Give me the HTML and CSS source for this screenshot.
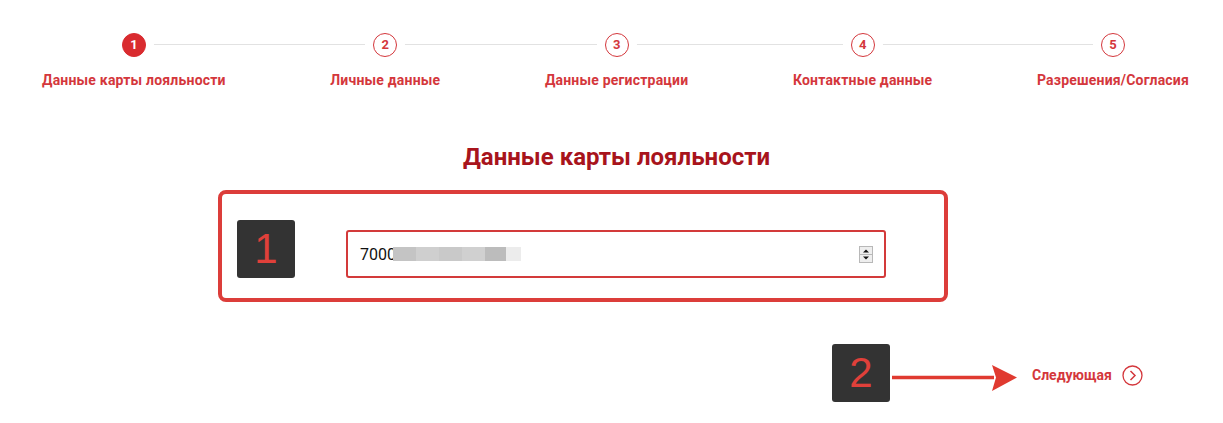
FILE: index.html
```html
<!DOCTYPE html>
<html lang="ru">
<head>
<meta charset="utf-8">
<title>Данные карты лояльности</title>
<link rel="stylesheet" href="styles.css">
</head>
<body>
<div class="stepper">
  <div class="step active"><span class="dot">1</span><span class="label">Данные карты лояльности</span></div>
  <div class="step"><span class="dot">2</span><span class="label">Личные данные</span></div>
  <div class="step"><span class="dot">3</span><span class="label">Данные регистрации</span></div>
  <div class="step"><span class="dot">4</span><span class="label">Контактные данные</span></div>
  <div class="step"><span class="dot">5</span><span class="label">Разрешения/Согласия</span></div>
</div>

<h1 class="title">Данные карты лояльности</h1>

<div class="card">
  <div class="marker">1</div>
  <div class="field">
    <span class="value">7000</span>
    <span class="blur"><i class="b1"></i><i class="b2"></i><i class="b3"></i><i class="b4"></i><i class="b5"></i><i class="b6"></i></span>
    <span class="spin">
      <svg width="14" height="17" viewBox="0 0 14 17"><rect x="0.5" y="0.5" width="13" height="16" fill="#eee" stroke="#b8b8b8"/><line x1="1" y1="8.5" x2="13" y2="8.5" stroke="#b8b8b8"/><path d="M4 6.5 L7 3.5 L10 6.5Z" fill="#111"/><path d="M4 10.5 L7 13.5 L10 10.5Z" fill="#111"/></svg>
    </span>
  </div>
</div>

<div class="nav">
  <div class="marker">2</div>
  <svg class="arrow" width="126" height="28" viewBox="0 0 126 28"><line x1="0" y1="13.5" x2="102" y2="13.5" stroke="#e03a30" stroke-width="3.5"/><path d="M100 1 L125 13.5 L100 27 L104 13.5Z" fill="#e03a30"/></svg>
  <a class="next">Следующая
    <svg width="21" height="21" viewBox="0 0 21 21"><circle cx="10.5" cy="10.5" r="9.5" fill="none" stroke="#d4373c" stroke-width="1.3"/><path d="M8.5 6 L13 10.5 L8.5 15" fill="none" stroke="#d4373c" stroke-width="1.5"/></svg>
  </a>
</div>
</body>
</html>
```
FILE: styles.css
```css
html, body {
  margin: 0;
  background: #fff;
  font-family: Roboto, "Liberation Sans", Arial, sans-serif;
}
.stepper {
  position: relative;
  display: flex;
  justify-content: space-between;
  padding: 33px 34px 0 42px;
}
.stepper::before {
  content: "";
  position: absolute;
  top: 44px;
  left: 134px;
  right: 109px;
  height: 1px;
  background: #e2e2e2;
}
.step {
  display: flex;
  flex-direction: column;
  align-items: center;
  gap: 15px;
}
.dot {
  position: relative;
  z-index: 1;
  box-sizing: border-box;
  width: 24px;
  height: 24px;
  border-radius: 50%;
  border: 1.5px solid #d4373c;
  background: #fff;
  box-shadow: 0 0 0 8px #fff;
  color: #d4373c;
  font-size: 13px;
  font-weight: 700;
  line-height: 21px;
  text-align: center;
}
.step.active .dot {
  background: #d92b2f;
  border-color: #d92b2f;
  color: #fff;
}
.label {
  color: #d4373c;
  font-size: 14px;
  font-weight: 700;
  letter-spacing: 0.2px;
  line-height: 17px;
  white-space: nowrap;
}
.title {
  margin: 54px 0 0 10px;
  text-align: center;
  font-size: 24px;
  line-height: 28px;
  font-weight: 700;
  color: #a8141c;
}
.card {
  box-sizing: border-box;
  width: 730px;
  height: 112px;
  margin: 19px 0 0 218px;
  border: 4px solid #dc3d3a;
  border-radius: 8px;
  display: flex;
  align-items: flex-start;
  padding: 26px 0 0 15px;
}
.marker {
  width: 58px;
  height: 58px;
  border-radius: 3px;
  background: #333;
  color: #e0403a;
  font-family: "Liberation Sans", Arial, sans-serif;
  font-size: 42px;
  line-height: 58px;
  text-align: center;
  flex: none;
}
.field {
  box-sizing: border-box;
  width: 540px;
  height: 48px;
  margin: 10px 0 0 51px;
  border: 2px solid #d33a3a;
  border-radius: 3px;
  display: flex;
  align-items: center;
  padding: 0 12px;
}
.value {
  font-size: 16px;
  color: #111;
}
.blur {
  display: flex;
  height: 14px;
  margin-left: -3px;
}
.blur i { display: block; height: 14px; }
.blur .b1 { width: 23px; background: #c4c4c4; }
.blur .b2 { width: 23px; background: #cfcfcf; }
.blur .b3 { width: 23px; background: #c9c9c9; }
.blur .b4 { width: 23px; background: #d0d0d0; }
.blur .b5 { width: 21px; background: #bcbcbc; }
.blur .b6 { width: 15px; background: #ececec; }
.spin {
  margin-left: auto;
  margin-right: -1px;
  display: flex;
}
.nav {
  display: flex;
  align-items: center;
  margin: 42px 0 0 832px;
}
.arrow {
  margin-left: 2px;
  margin-top: 9px;
  flex: none;
}
.next {
  display: flex;
  align-items: center;
  gap: 10px;
  margin-left: 14px;
  margin-top: 4px;
  color: #d4373c;
  font-size: 14px;
  font-weight: 700;
}
```
